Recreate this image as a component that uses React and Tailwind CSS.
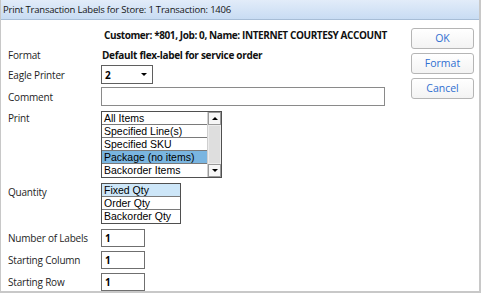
import React from 'react';

const UI = { fontFamily: '"Open Sans", "Noto Sans", sans-serif' };
const LIST = { fontFamily: '"Liberation Sans", Arial, sans-serif' };

const printItems = ['All Items', 'Specified Line(s)', 'Specified SKU', 'Package (no items)', 'Backorder Items'];
const qtyItems = ['Fixed Qty', 'Order Qty', 'Backorder Qty'];

function Label({ children, className = '' }) {
  return <div className={`w-[93px] shrink-0 text-[10px] leading-[14px] tracking-[-0.2px] text-[#1e1e1e] ${className}`}>{children}</div>;
}

function SmallInput({ value }) {
  return (
    <div className="w-[44px] h-[18px] border border-[#6f6f6f] bg-white pl-[3px] text-[10px] leading-[16px] font-bold text-black">
      {value}
    </div>
  );
}

function ScrollArrow({ up }) {
  return (
    <div className="h-[13px] w-[13px] border border-[#9a9a9a] bg-[#f6f6f6] flex items-center justify-center">
      <div
        className={
          up
            ? 'w-0 h-0 border-l-[3px] border-r-[3px] border-b-[3px] border-l-transparent border-r-transparent border-b-black'
            : 'w-0 h-0 border-l-[3px] border-r-[3px] border-t-[3px] border-l-transparent border-r-transparent border-t-black'
        }
      />
    </div>
  );
}

export default function App() {
  return (
    <div style={UI} className="w-[481px] h-[293px] bg-white border-l border-r-2 border-b-2 border-[#c8c8c8] flex flex-col overflow-hidden">
      {/* title bar */}
      <div className="h-[20px] shrink-0 bg-gradient-to-b from-[#e2ecf9] to-[#c8dcf3] border-b border-[#a7bdd6] pl-[2px] text-[9.5px] leading-[19px] tracking-[-0.2px] text-[#151515]">
        Print Transaction Labels for Store: 1 Transaction: 1406
      </div>

      <div className="flex flex-1">
        {/* form */}
        <div className="w-[410px] pl-[7px] pt-[8px] flex flex-col">
          <div className="flex h-[14px]">
            <Label />
            <div className="text-[10px] leading-[14px] font-bold tracking-[-0.4px] text-[#111] whitespace-nowrap pl-[3px]">
              Customer: *801, Job: 0, Name: INTERNET COURTESY ACCOUNT
            </div>
          </div>

          <div className="flex h-[14px] mt-[6px]">
            <Label>Format</Label>
            <div className="text-[10px] leading-[14px] font-bold tracking-[-0.3px] text-[#111] whitespace-nowrap pl-[1px]">
              Default flex-label for service order
            </div>
          </div>

          <div className="flex items-center mt-[3px]">
            <Label>Eagle Printer</Label>
            <div className="w-[52px] h-[19px] border border-[#5f5f5f] bg-white flex items-center justify-between pl-[3px] pr-[5px]">
              <span className="text-[10px] font-bold text-black leading-[16px]">2</span>
              <div className="w-0 h-0 border-l-[3px] border-r-[3px] border-t-[3px] border-l-transparent border-r-transparent border-t-black" />
            </div>
          </div>

          <div className="flex items-center mt-[3px]">
            <Label>Comment</Label>
            <div className="w-[284px] h-[19px] border border-[#8a8a8a] bg-white" />
          </div>

          <div className="flex mt-[5px]">
            <Label>Print</Label>
            <div style={LIST} className="w-[121px] h-[67px] border border-[#4f4f4f] bg-white flex">
              <div className="flex-1 flex flex-col">
                {printItems.map((item, i) => (
                  <div
                    key={item}
                    className={`h-[13px] pl-[2px] text-[10.5px] leading-[12px] text-black whitespace-nowrap ${
                      i < printItems.length - 1 ? 'border-b border-[#7a7a7a]' : ''
                    } ${i === 3 ? 'bg-[#7ab5e0]' : ''}`}
                  >
                    {item}
                  </div>
                ))}
              </div>
              <div className="w-[14px] border-l border-[#cfcfcf] bg-[#ececec] flex flex-col justify-between">
                <ScrollArrow up />
                <div className="flex-1 mx-[1px] my-[1px] bg-[#dedede]" />
                <ScrollArrow />
              </div>
            </div>
          </div>

          <div className="flex mt-[5px]">
            <Label className="pt-[2px]">Quantity</Label>
            <div style={LIST} className="w-[80px] border border-[#4f4f4f] bg-white flex flex-col">
              {qtyItems.map((item, i) => (
                <div
                  key={item}
                  className={`h-[13px] pl-[2px] text-[10.5px] leading-[12px] text-black whitespace-nowrap ${
                    i < qtyItems.length - 1 ? 'border-b border-[#7a7a7a]' : ''
                  } ${i === 0 ? 'bg-[#cde6f8]' : ''}`}
                >
                  {item}
                </div>
              ))}
            </div>
          </div>

          <div className="flex items-center mt-[5px]">
            <Label>Number of Labels</Label>
            <SmallInput value="1" />
          </div>
          <div className="flex items-center mt-[4px]">
            <Label>Starting Column</Label>
            <SmallInput value="1" />
          </div>
          <div className="flex items-center mt-[4px]">
            <Label>Starting Row</Label>
            <SmallInput value="1" />
          </div>
        </div>

        {/* buttons */}
        <div className="flex flex-col gap-[4px] pt-[8px]">
          {['OK', 'Format', 'Cancel'].map((b) => (
            <button
              key={b}
              className="w-[63px] h-[21px] rounded-[3px] border border-[#b5b5b5] bg-gradient-to-b from-white to-[#f3f3f3] text-[10.5px] leading-[19px] text-[#2f6fd1]"
            >
              {b}
            </button>
          ))}
        </div>
      </div>
    </div>
  );
}
